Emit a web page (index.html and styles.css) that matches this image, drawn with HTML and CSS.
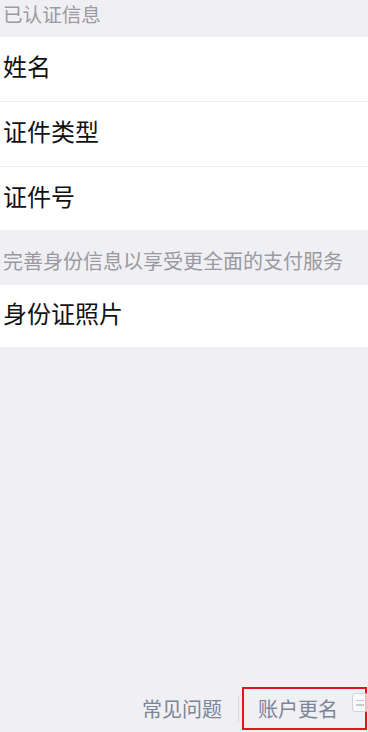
FILE: index.html
```html
<!DOCTYPE html>
<html lang="zh-CN">
<head>
  <meta charset="UTF-8" />
  <meta name="viewport" content="width=device-width, initial-scale=1" />
  <title>已认证信息</title>
  <link rel="stylesheet" href="styles.css">
</head>
<body>

<!-- 已认证信息 -->
  <div class="page">
    <div class="section-title">已认证信息</div>
    <div class="list">
      <div class="row">姓名</div>
      <div class="row">证件类型</div>
      <div class="row last">证件号</div>
    </div>

    <div class="section-tip">完善身份信息以享受更全面的支付服务</div>
    <div class="list">
      <div class="row photo last">身份证照片</div>
    </div>

<!-- フッター -->
    <div class="footer">
      <a href="#" class="footer-link">常见问题</a>
      <span class="footer-divider"></span>
      <a href="#" class="footer-link rename">
        账户更名
        <span class="float-icon"><i></i><i></i></span>
      </a>
    </div>
  </div>

</body>
</html>
```

FILE: styles.css
```css
    * {
      margin: 0;
      padding: 0;
      box-sizing: border-box;
    }

    body {
      font-family: "Noto Sans CJK SC", "Noto Sans", sans-serif;
      background: #efeff4;
      color: #111;
    }

    .page {
      display: flex;
      flex-direction: column;
      min-height: 732px;
    }

/* セクション見出し */
    .section-title {
      height: 37px;
      line-height: 28px;
      padding-left: 3px;
      font-size: 19.6px;
      color: #9a9a9f;
    }

    .section-tip {
      height: 55px;
      padding: 7px 0 0 3px;
      line-height: 48px;
      font-size: 20px;
      color: #9a9a9f;
      white-space: nowrap;
    }

/* リスト */
    .list {
      background: #fff;
    }

    .row {
      height: 65px;
      line-height: 58px;
      padding-left: 3px;
      font-size: 24px;
      border-bottom: 1px solid #ececec;
    }

    .row.last {
      height: 63px;
      border-bottom: none;
    }

    .row.photo {
      height: 62px;
      line-height: 56px;
    }

/* フッター */
    .footer {
      margin-top: auto;
      display: flex;
      justify-content: flex-end;
      align-items: center;
      padding: 0 1px 2px 0;
    }

    .footer-link {
      font-size: 20px;
      color: #7c8594;
      text-decoration: none;
    }

    .footer-divider {
      width: 1px;
      height: 26px;
      background: #d9d9de;
      margin: 0 3px 0 16px;
    }

    .rename {
      position: relative;
      width: 125px;
      height: 43px;
      line-height: 39px;
      padding-left: 14px;
      border: 2px solid #e3141c;
    }

    .float-icon {
      position: absolute;
      top: 4px;
      right: -3px;
      width: 16px;
      height: 19px;
      border: 1.5px solid #d2d4d8;
      border-radius: 3px;
      background: rgba(255, 255, 255, 0.7);
      display: flex;
      flex-direction: column;
      justify-content: center;
      gap: 3px;
      padding: 0 3px;
    }

    .float-icon i {
      display: block;
      height: 1.5px;
      background: #c8cad0;
    }
```
